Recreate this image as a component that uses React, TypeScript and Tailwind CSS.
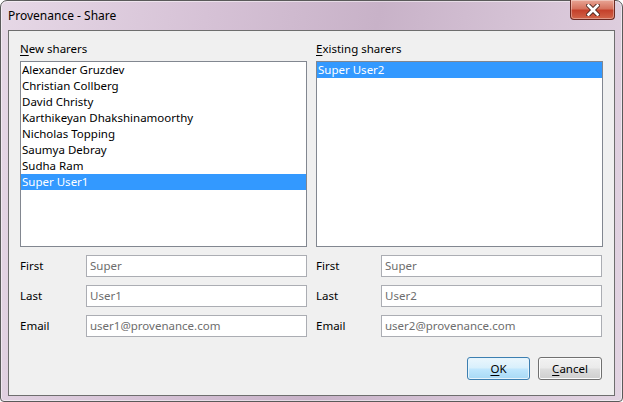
import React from "react";

const font = { fontFamily: '"Noto Sans", "Segoe UI", sans-serif' };

function ListBox({ items, selected }: { items: string[]; selected: number }) {
  return (
    <div className="h-[186px] border border-[#828790] bg-white">
      {items.map((it, i) => (
        <div
          key={it}
          className={
            "h-4 pl-[1px] text-[11.5px] leading-[16px] whitespace-nowrap " +
            (i === selected ? "bg-[#3399ff] text-white" : "text-black")
          }
        >
          {it}
        </div>
      ))}
    </div>
  );
}

function Field({ label, value, lw }: { label: string; value: string; lw: string }) {
  return (
    <div className="flex h-[22px] items-center">
      <div className={lw + " shrink-0 text-[11.5px] text-black"}>{label}</div>
      <div className="flex h-[22px] w-[221px] items-center border border-[#abadb3] bg-white pl-[3px] text-[11.5px] text-[#6d6d6d]">
        {value}
      </div>
    </div>
  );
}

function Column({
  mnemonic,
  rest,
  items,
  selected,
  first,
  last,
  email,
  lw,
}: {
  mnemonic: string;
  rest: string;
  items: string[];
  selected: number;
  first: string;
  last: string;
  email: string;
  lw: string;
}) {
  return (
    <div className="flex w-[287px] flex-col">
      <div className="h-4 text-[11.5px] leading-[16px] text-black">
        <span className="underline underline-offset-2">{mnemonic}</span>
        {rest}
      </div>
      <div className="mt-1">
        <ListBox items={items} selected={selected} />
      </div>
      <div className="mt-2 flex flex-col gap-2">
        <Field label="First" value={first} lw={lw} />
        <Field label="Last" value={last} lw={lw} />
        <Field label="Email" value={email} lw={lw} />
      </div>
    </div>
  );
}

export default function App() {
  return (
    <div style={font} className="h-[402px] w-[623px] bg-white">
      <div className="flex h-[402px] w-[623px] flex-col rounded-t-[7px] rounded-b-[4px] border border-[#5a5a5a] bg-[linear-gradient(100deg,#e6d8e6_0%,#d6c2d6_30%,#c8b2c8_55%,#d8c6d8_80%,#e2d4e2_100%)] shadow-[inset_0_0_0_1px_rgba(255,255,255,0.5)]">
        {/* Title bar */}
        <div className="relative flex h-[29px] shrink-0 items-center pl-[7px]">
          <span className="text-[12px] text-black">Provenance - Share</span>
          <div className="absolute right-[7px] top-[-1px] flex h-[20px] w-[45px] items-center justify-center rounded-b-[4px] border border-[#6b2a22] border-t-0 bg-[linear-gradient(180deg,#e8a595_0%,#d6735f_45%,#c4412b_55%,#d2654a_100%)] shadow-[inset_0_0_0_1px_rgba(255,255,255,0.35)]">
            <svg width="14" height="12" viewBox="0 0 14 12">
              <path
                d="M2.5 1.5 L11.5 10.5 M11.5 1.5 L2.5 10.5"
                stroke="#3b1a14"
                strokeWidth="4.4"
                strokeLinecap="square"
              />
              <path
                d="M2.5 1.5 L11.5 10.5 M11.5 1.5 L2.5 10.5"
                stroke="#ffffff"
                strokeWidth="2.8"
                strokeLinecap="square"
              />
            </svg>
          </div>
        </div>
        {/* Client area */}
        <div className="mx-[7px] flex h-[366px] flex-col border border-[#6e6e6e] bg-[#f0f0f0] pl-[11px] pr-[11px] pt-[10px]">
          <div className="flex gap-[9px]">
            <Column
              mnemonic="N"
              rest="ew sharers"
              items={[
                "Alexander Gruzdev",
                "Christian Collberg",
                "David Christy",
                "Karthikeyan Dhakshinamoorthy",
                "Nicholas Topping",
                "Saumya Debray",
                "Sudha Ram",
                "Super User1",
              ]}
              selected={7}
              first="Super"
              last="User1"
              email="user1@provenance.com"
              lw="w-[66px]"
            />
            <Column
              mnemonic="E"
              rest="xisting sharers"
              items={["Super User2"]}
              selected={0}
              first="Super"
              last="User2"
              email="user2@provenance.com"
              lw="w-[65px]"
            />
          </div>
          <div className="mt-[20px] flex justify-end gap-[8px] pr-[1px]">
            <button className="flex h-[23px] w-[63px] items-center justify-center rounded-[3px] border border-[#3c7fb1] bg-[linear-gradient(180deg,#eaf6fd_0%,#d9f0fc_45%,#bee6fd_55%,#a7d9f5_100%)] text-[11.5px] text-black shadow-[inset_0_0_0_1px_#e6f4fc]">
              <span className="underline underline-offset-2">O</span>K
            </button>
            <button className="flex h-[23px] w-[64px] items-center justify-center rounded-[3px] border border-[#707070] bg-[linear-gradient(180deg,#f2f2f2_0%,#ebebeb_45%,#dddddd_55%,#cfcfcf_100%)] text-[11.5px] text-black shadow-[inset_0_0_0_1px_#fcfcfc]">
              <span className="underline underline-offset-2">C</span>ancel
            </button>
          </div>
        </div>
      </div>
    </div>
  );
}
